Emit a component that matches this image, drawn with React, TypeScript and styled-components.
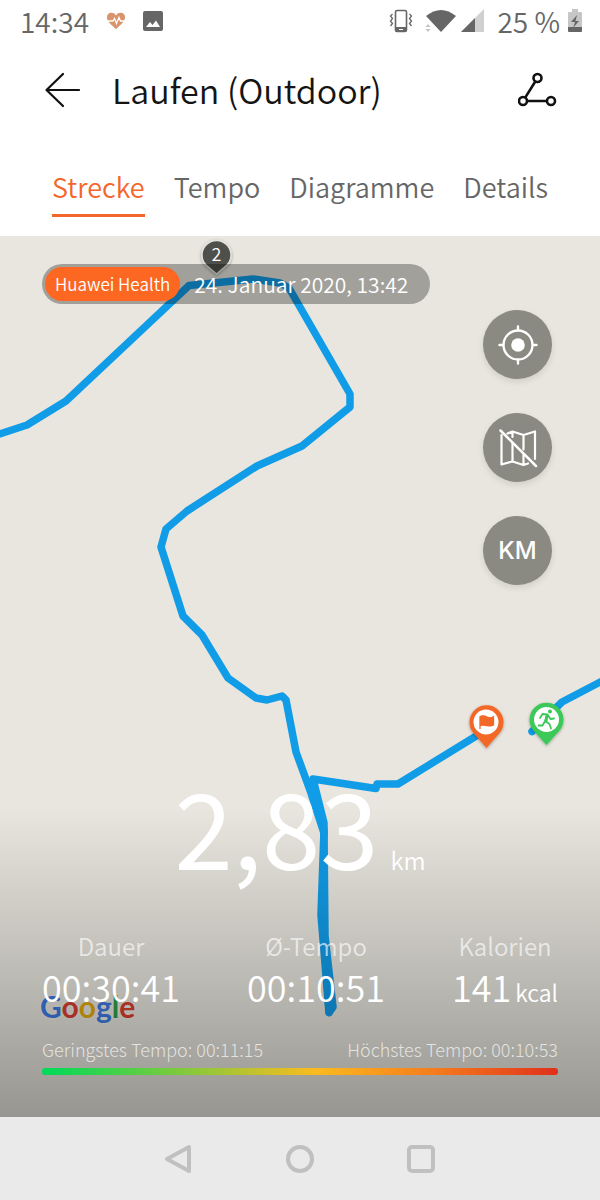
import React from "react";
import styled, { createGlobalStyle } from "styled-components";

const GlobalStyle = createGlobalStyle`
  * { box-sizing: border-box; }
  html, body { margin: 0; padding: 0; }
  body {
    background: #fff;
    font-family: "Noto Sans CJK SC", "Noto Sans", sans-serif;
    font-weight: 350;
  }
  button { border: 0; padding: 0; background: none; font: inherit; color: inherit; cursor: pointer; }
  svg { display: block; }
`;

const Screen = styled.div`
  display: flex;
  flex-direction: column;
  min-height: 100vh;
`;

const StatusBar = styled.div`
  display: flex;
  align-items: center;
  justify-content: space-between;
  height: 42px;
  padding: 0 18px 0 20px;
  color: #666;
  font-size: 28px;
  line-height: 42px;
`;

const StatusGroup = styled.div<{ $gap: number }>`
  display: flex;
  align-items: center;
  gap: ${(p) => p.$gap}px;
`;

const Header = styled.header`
  display: flex;
  align-items: center;
  height: 96px;
  padding: 0 42px;
`;

const IconButton = styled.button`
  display: flex;
  align-items: center;
  justify-content: center;
  width: 40px;
  height: 40px;
`;

const Title = styled.h1`
  flex: 1;
  margin: 0 0 0 30px;
  color: #141414;
  font-size: 34px;
  line-height: 48px;
  font-weight: 350;
`;

const Tabs = styled.nav`
  display: flex;
  justify-content: space-between;
  height: 98px;
  padding: 29px 52px 0;
`;

const Tab = styled.button<{ $active?: boolean }>`
  height: 50px;
  padding-bottom: 7px;
  border-bottom: 3px solid ${(p) => (p.$active ? "#f4662a" : "transparent")};
  color: ${(p) => (p.$active ? "#f4662a" : "#666")};
  font-size: 27px;
  line-height: 40px;
`;

const MapArea = styled.main`
  position: relative;
  display: flex;
  flex: 1;
  flex-direction: column;
  min-height: 800px;
  background: #e8e6de;
`;

const RouteMap = styled.svg`
  position: absolute;
  inset: 0;
  width: 100%;
  height: 100%;
`;

const GoogleMark = styled.a`
  position: absolute;
  left: 40px;
  bottom: 91px;
  font-family: Lato, sans-serif;
  font-size: 30px;
  line-height: 40px;
  font-weight: 700;
  text-decoration: none;
  text-shadow: 0 0 3px rgba(255, 255, 255, 0.6);
`;

const Letter = styled.span<{ $color: string }>`
  color: ${(p) => p.$color};
`;

const Shade = styled.div`
  position: absolute;
  inset: auto 0 0;
  height: 310px;
  background: linear-gradient(rgba(0, 0, 0, 0), rgba(0, 0, 0, 0.35));
`;

const Overlay = styled.div`
  position: relative;
  display: flex;
  flex: 1;
  flex-direction: column;
  padding: 28px 42px 42px;
  color: #fff;
`;

const SourcePill = styled.div`
  display: flex;
  align-items: center;
  align-self: flex-start;
  height: 40px;
  padding: 3px 22px 3px 3px;
  border-radius: 20px;
  background: rgba(0, 0, 0, 0.3);
  font-size: 21px;
  line-height: 32px;
`;

const SourceName = styled.span`
  margin-right: 14px;
  padding: 0 10px;
  border-radius: 17px;
  background: #fc6722;
  font-size: 17px;
  line-height: 34px;
`;

const Controls = styled.div`
  display: flex;
  flex-direction: column;
  align-self: flex-end;
  gap: 34px;
  margin: 6px 6px 0 0;
`;

const RoundButton = styled.button`
  display: flex;
  align-items: center;
  justify-content: center;
  width: 69px;
  height: 69px;
  border-radius: 50%;
  background: #8a8982;
  box-shadow: 0 3px 6px rgba(0, 0, 0, 0.1);
  font-family: Inter, sans-serif;
  font-size: 24px;
  font-weight: 500;
`;

const Summary = styled.section`
  margin-top: auto;
`;

const Distance = styled.div`
  display: flex;
  align-items: baseline;
  justify-content: center;
  gap: 12px;
  font-size: 105px;
  line-height: 120px;
  font-weight: 400;
`;

const DistanceUnit = styled.span`
  font-size: 24px;
  font-weight: 350;
`;

const Stats = styled.dl`
  display: flex;
  justify-content: space-between;
  margin: 8px 0 0;
`;

const Stat = styled.div`
  text-align: center;
`;

const StatLabel = styled.dt`
  color: rgba(255, 255, 255, 0.65);
  font-size: 24px;
  line-height: 36px;
`;

const StatValue = styled.dd`
  margin: 0;
  font-size: 36px;
  line-height: 44px;
`;

const StatUnit = styled.span`
  margin-left: 4px;
  font-size: 23px;
`;

const PaceRange = styled.div`
  display: flex;
  justify-content: space-between;
  margin: 23px 0 7px;
  color: rgba(255, 255, 255, 0.7);
  font-size: 18px;
  line-height: 24px;
  font-weight: 300;
`;

const PaceBar = styled.div`
  height: 7px;
  border-radius: 3px;
  background: linear-gradient(90deg, #00d95a, #fbbb20 53%, #f4791c 77%, #e0301c);
`;

const NavBar = styled.nav`
  display: flex;
  align-items: center;
  justify-content: center;
  gap: 81px;
  height: 83px;
  background: #eaeaea;
`;

const stats = [
  { label: "Dauer", value: "00:30:41" },
  { label: "Ø-Tempo", value: "00:10:51" },
  { label: "Kalorien", value: "141", unit: "kcal" },
];

const googleLetters = [
  ["G", "#3f7ae0"],
  ["o", "#d8402f"],
  ["o", "#e0aa10"],
  ["g", "#3f7ae0"],
  ["l", "#2f9e4b"],
  ["e", "#d8402f"],
];

const HeartIcon = () => (
  <svg width="20" height="18" viewBox="0 0 20 18">
    <path d="M10 17C5 12.500 1 9.500 1 5.500A4.700 4.700 0 0 1 10 3.500 4.700 4.700 0 0 1 19 5.500C19 9.500 15 12.500 10 17Z" fill="#d9946c" />
    <path d="M1 9h6l1.500-2.500 2 5 2.500-6 1.500 3.500H19" fill="none" stroke="#fff" strokeWidth="1.300" />
  </svg>
);

const PictureIcon = () => (
  <svg width="20" height="20" viewBox="0 0 20 20">
    <rect width="20" height="20" rx="2" fill="#666" />
    <path d="M3 16l4-5 2.500 3 3.500-4.500L17 16z" fill="#fff" />
  </svg>
);

const VibrateIcon = () => (
  <svg width="24" height="24" viewBox="0 0 24 24" fill="none" stroke="#666">
    <rect x="6.500" y="1.500" width="11" height="21" rx="1.500" strokeWidth="1.600" />
    <path d="M7 18.500h10v3.500H7z" fill="#666" />
    <path d="M10 20.500h4" stroke="#fff" />
    <path d="M3.500 5l-2 2 2 2.500-2 2.500 2 2.500-2 2.500M20.500 5l2 2-2 2.500 2 2.500-2 2.500 2 2.500" strokeWidth="1.300" />
  </svg>
);

const WifiIcon = () => (
  <svg width="32" height="24" viewBox="0 0 32 24">
    <path d="M1 7Q16-5 31 7L16 23z" fill="#666" />
    <path d="M3 15l2.500 3h-5zM3 23l2.500-3h-5z" fill="#c4c4c4" />
  </svg>
);

const SignalIcon = () => (
  <svg width="24" height="24" viewBox="0 0 24 24">
    <path d="M0 23L23 0v23z" fill="#d0d0d0" />
    <path d="M0 23L14 9v14z" fill="#666" />
  </svg>
);

const BatteryIcon = () => (
  <svg width="14" height="24" viewBox="0 0 14 24">
    <path d="M4 0h6v3h3a1 1 0 0 1 1 1v14H0V4a1 1 0 0 1 1-1h3z" fill="#c6c6c6" />
    <path d="M0 18h14v4a1 1 0 0 1-1 1H1a1 1 0 0 1-1-1z" fill="#666" />
    <path d="M9 6L3 13h4l-2 6 6-7H7.500z" fill="#666" />
  </svg>
);

const BackIcon = () => (
  <svg width="36" height="36" viewBox="0 0 36 36" fill="none" stroke="#111" strokeWidth="2.200" strokeLinecap="round" strokeLinejoin="round">
    <path d="M19 2L2.500 18 19 34M2.500 18H35" />
  </svg>
);

const TrackIcon = () => (
  <svg width="40" height="36" viewBox="0 0 40 36" fill="none" stroke="#111" strokeWidth="2.600">
    <circle cx="19.500" cy="6" r="4" />
    <circle cx="5" cy="29" r="4" />
    <circle cx="33" cy="29" r="4" />
    <path d="M17.300 9.500L7.200 25.600M9 29h20" />
  </svg>
);

const LocateIcon = () => (
  <svg width="40" height="40" viewBox="0 0 40 40" fill="none" stroke="#fff" strokeWidth="2.400" strokeLinecap="round">
    <circle cx="20" cy="20" r="14.500" />
    <circle cx="20" cy="20" r="6.800" fill="#fff" stroke="none" />
    <path d="M20 1.500V5M20 35v3.500M1.500 20H5M35 20h3.500" />
  </svg>
);

const MapOffIcon = () => (
  <svg width="40" height="40" viewBox="0 0 40 40" fill="none" stroke="#fff" strokeWidth="2.200" strokeLinecap="round" strokeLinejoin="round">
    <path d="M3.500 7V36.500L14.500 33.500 25.500 37 30 35.500M9.500 5.500L14.500 3.500 25.500 7 37 3.500V31M14.500 4v5M14.500 14.500v19M25.500 7v14.500M25.500 27v9.500" />
    <path d="M2.500 2.500L38 38" strokeWidth="2.500" />
  </svg>
);

const Route = () => (
  <RouteMap viewBox="0 0 600 881" preserveAspectRatio="xMidYMid slice" role="img" aria-label="Laufstrecke">
    <defs>
      <filter id="pinShadow" x="-30%" y="-30%" width="160%" height="160%">
        <feDropShadow dx="0" dy="1" stdDeviation="1.500" floodOpacity="0.35" />
      </filter>
    </defs>
    <g fill="none" stroke="#119ce8" strokeWidth="7.500" strokeLinecap="round" strokeLinejoin="round">
      <path d="M-5 199.500L27 189 66 165 189 49.500 253 43 280 47 289 52 350 158V171L302 210 257 230 187 275 166 293 161 311 183 380 202 399 228 442 256 462 267 464 282 460 286 464 296 516 311 557 324 597" />
      <path d="M486 494L398 548H377L376 552.500 313 543 324 587V594L321 679 329 776.500" />
      <path d="M311 557L313 543L324 587L324 597Z" fill="#119ce8" stroke="none" />
      <path d="M324 594L325 700 333 771 329 776.500 325 710" />
      <path d="M605 443.500L562 466 532 495.500" />
    </g>
    <g filter="url(#pinShadow)">
      <path d="M216.500 38L205.500 28.500A14.500 14.500 0 1 1 227.500 28.500Z" fill="#504f4c" stroke="#e4e2dc" strokeWidth="1.500" />
    </g>
    <text x="216.500" y="25" textAnchor="middle" fontSize="18" fill="#fff">2</text>
    <g filter="url(#pinShadow)">
      <path d="M486.500 512L473 496.500A17 17 0 1 1 500 496.500Z" fill="#f36726" />
      <circle cx="486" cy="486" r="12.500" fill="#fff" />
      <path d="M480 493V480.500Q483 479 487 481T493.500 480.500V489Q491 490.500 487 489.500T480 489.500" fill="#f36726" stroke="#f36726" strokeWidth="1.300" strokeLinejoin="round" />
    </g>
    <g filter="url(#pinShadow)">
      <path d="M546.500 509L533 494A17 17 0 1 1 560 494Z" fill="#3cc85a" />
      <circle cx="546.500" cy="483.500" r="12.500" fill="#fff" />
      <circle cx="550" cy="475.500" r="2" fill="#3cc85a" />
      <g fill="none" stroke="#3cc85a" strokeWidth="1.800" strokeLinecap="round" strokeLinejoin="round">
        <path d="M540 482L542.500 478 547.500 478.500 550.500 483 554 482.500" />
        <path d="M547 479.500L545 485 549.500 488 551 492.500M544.500 486L542.500 489.500H538.500" />
        <path d="M547 480L546 485" strokeWidth="3" />
      </g>
    </g>
  </RouteMap>
);

export default function App() {
  return (
    <Screen>
      <GlobalStyle />
      <StatusBar>
        <StatusGroup $gap={17}>
          <span>14:34</span>
          <HeartIcon />
          <PictureIcon />
        </StatusGroup>
        <StatusGroup $gap={8}>
          <StatusGroup $gap={12}>
            <VibrateIcon />
            <StatusGroup $gap={4}>
              <WifiIcon />
              <SignalIcon />
            </StatusGroup>
            <span>25 %</span>
          </StatusGroup>
          <BatteryIcon />
        </StatusGroup>
      </StatusBar>
      <Header>
        <IconButton aria-label="Zurück"><BackIcon /></IconButton>
        <Title>Laufen (Outdoor)</Title>
        <IconButton aria-label="Strecke teilen"><TrackIcon /></IconButton>
      </Header>
      <Tabs>
        <Tab $active>Strecke</Tab>
        <Tab>Tempo</Tab>
        <Tab>Diagramme</Tab>
        <Tab>Details</Tab>
      </Tabs>
      <MapArea>
        <Route />
        <GoogleMark href="#google" aria-label="Google">
          {googleLetters.map(([letter, color], i) => (
            <Letter key={i} $color={color}>{letter}</Letter>
          ))}
        </GoogleMark>
        <Shade />
        <Overlay>
          <SourcePill>
            <SourceName>Huawei Health</SourceName>
            <time dateTime="2020-01-24T13:42">24. Januar 2020, 13:42</time>
          </SourcePill>
          <Controls>
            <RoundButton aria-label="Zentrieren"><LocateIcon /></RoundButton>
            <RoundButton aria-label="Karte ausblenden"><MapOffIcon /></RoundButton>
            <RoundButton>KM</RoundButton>
          </Controls>
          <Summary>
            <Distance>
              2,83<DistanceUnit>km</DistanceUnit>
            </Distance>
            <Stats>
              {stats.map((s) => (
                <Stat key={s.label}>
                  <StatLabel>{s.label}</StatLabel>
                  <StatValue>
                    {s.value}
                    {s.unit && <StatUnit>{s.unit}</StatUnit>}
                  </StatValue>
                </Stat>
              ))}
            </Stats>
            <PaceRange>
              <span>Geringstes Tempo: 00:11:15</span>
              <span>Höchstes Tempo: 00:10:53</span>
            </PaceRange>
            <PaceBar />
          </Summary>
        </Overlay>
      </MapArea>
      <NavBar>
        <IconButton aria-label="Zurück">
          <svg width="28" height="30" viewBox="0 0 28 30" fill="none" stroke="#c0c0c0" strokeWidth="4" strokeLinejoin="round">
            <path d="M2 15L24 3v24z" />
          </svg>
        </IconButton>
        <IconButton aria-label="Startbildschirm">
          <svg width="28" height="28" viewBox="0 0 28 28" fill="none" stroke="#c0c0c0" strokeWidth="4">
            <circle cx="14" cy="14" r="12" />
          </svg>
        </IconButton>
        <IconButton aria-label="Letzte Apps">
          <svg width="28" height="28" viewBox="0 0 28 28" fill="none" stroke="#c0c0c0" strokeWidth="4">
            <rect x="2" y="2" width="24" height="24" rx="3" />
          </svg>
        </IconButton>
      </NavBar>
    </Screen>
  );
}
